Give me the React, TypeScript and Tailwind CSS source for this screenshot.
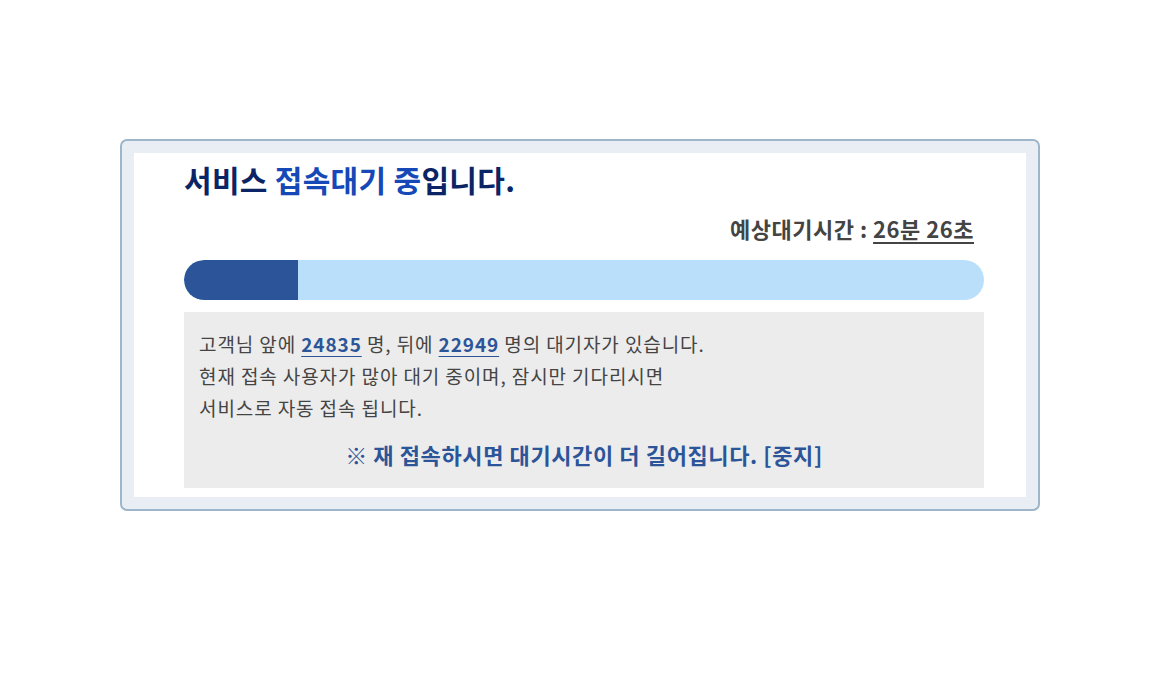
const FONT = "font-['Noto_Sans_CJK_KR','Noto_Sans',sans-serif]";

export default function App() {
  const progress = 14.25;

  return (
    <div className={`${FONT} min-h-[694px] bg-white pt-[139px]`}>
      <div className="mx-[120px] w-[920px] rounded-[7px] border-2 border-[#9db6c9] bg-[#e8eef3] p-3">
        <div className="bg-white pb-[9px] pl-[50px] pr-[42px] pt-[6px]">
          <h1 className="text-[30px] font-bold leading-[40px] tracking-[0.3px] text-[#0b2466]">
            서비스 <span className="text-[#1748b8]">접속대기 중</span>입니다.
          </h1>

          <div className="mt-[14px] pr-[10px] text-right text-[22px] font-bold leading-[30px] tracking-[0.5px] text-[#444]">
            예상대기시간 : <span className="underline underline-offset-4">26분 26초</span>
          </div>

          <div className="mt-[17px] h-10 overflow-hidden rounded-full bg-[#b9dffa]">
            <div className="h-full rounded-l-full bg-[#2c5599]" style={{ width: `${progress}%` }} />
          </div>

          <div className="mt-3 bg-[#ececec] px-[15px] pb-[18px] pt-[16px]">
            <p className="text-[19px] leading-[32px] tracking-[0.9px] text-[#444]">
              고객님 앞에 <b className="text-[#2c5599] underline underline-offset-4">24835</b> 명, 뒤에{" "}
              <b className="text-[#2c5599] underline underline-offset-4">22949</b> 명의 대기자가 있습니다.
              <br />
              현재 접속 사용자가 많아 대기 중이며, 잠시만 기다리시면
              <br />
              서비스로 자동 접속 됩니다.
            </p>
            <p className="mt-[14px] text-center text-[22px] font-bold leading-[32px] tracking-[0.6px] text-[#2c5599]">
              ※ 재 접속하시면 대기시간이 더 길어집니다. [중지]
            </p>
          </div>
        </div>
      </div>
    </div>
  );
}
